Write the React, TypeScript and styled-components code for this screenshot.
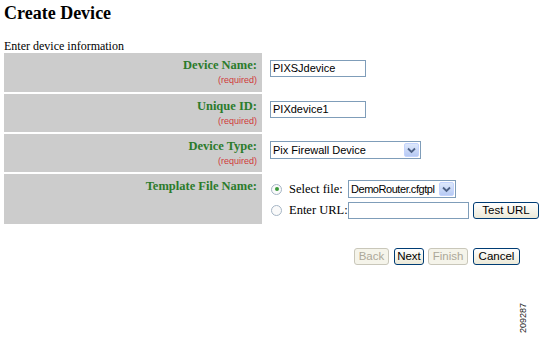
import styled, { createGlobalStyle } from "styled-components";

const GlobalStyle = createGlobalStyle`
  html, body { margin: 0; padding: 0; background: #ffffff; }
  body { font-family: "Liberation Serif", "Times New Roman", serif; color: #000; }
`;

const Page = styled.div`
  width: 555px;
  height: 339px;
  padding: 3px 0 0 4px;
  box-sizing: border-box;
  position: relative;
`;

const Title = styled.h1`
  margin: 0;
  font-size: 18px;
  font-weight: bold;
  line-height: 21px;
`;

const Intro = styled.div`
  margin-top: 15px;
  font-size: 12px;
  line-height: 14px;
`;

const Form = styled.div`
  display: grid;
  grid-template-columns: 258px 1fr;
  row-gap: 2px;
`;

const LabelCell = styled.div<{ $h: number }>`
  background: #cccccc;
  height: ${(p) => p.$h}px;
  box-sizing: border-box;
  padding: 5px 5px 0 0;
  text-align: right;
`;

const Label = styled.div`
  color: #2b7b2b;
  font-weight: bold;
  font-size: 12.5px;
  line-height: 15px;
`;

const Required = styled.div`
  color: #d03a3a;
  font-family: "Liberation Sans", Arial, sans-serif;
  font-size: 9px;
  line-height: 12px;
  margin-top: 1px;
`;

const ValueCell = styled.div<{ $top: number }>`
  padding: ${(p) => p.$top}px 0 0 8px;
`;

const TextInput = styled.div<{ $w: number }>`
  width: ${(p) => p.$w}px;
  height: 17px;
  flex-shrink: 0;
  box-sizing: border-box;
  border: 1px solid #7f9db9;
  background: #fff;
  font-family: "Liberation Sans", Arial, sans-serif;
  font-size: 11px;
  line-height: 15px;
  padding-left: 2px;
  white-space: nowrap;
  overflow: hidden;
`;

const SelectBox = styled.div<{ $w: number }>`
  width: ${(p) => p.$w}px;
  height: 18px;
  flex-shrink: 0;
  box-sizing: border-box;
  border: 1px solid #7f9db9;
  background: #fff;
  display: flex;
  align-items: stretch;
  font-family: "Liberation Sans", Arial, sans-serif;
  font-size: 11px;
`;

const SelectText = styled.div<{ $tight?: boolean }>`
  flex: 1;
  padding-left: 2px;
  line-height: 16px;
  letter-spacing: ${(p) => (p.$tight ? "-0.45px" : "0")};
  white-space: nowrap;
  overflow: hidden;
`;

const Arrow = styled.div`
  width: 15px;
  flex-shrink: 0;
  margin: 1px;
  border-radius: 2px;
  background: linear-gradient(#dde8fb, #b7caf4);
  border: 1px solid #c3d3fd;
  box-sizing: border-box;
  display: flex;
  align-items: center;
  justify-content: center;
`;

const RadioGroup = styled.div`
  display: flex;
  flex-direction: column;
  gap: 3px;
`;

const RadioRow = styled.div`
  display: flex;
  align-items: center;
  height: 18px;
  font-size: 12.5px;
  white-space: nowrap;
`;

const Radio = styled.span<{ $on?: boolean }>`
  width: 9px;
  height: 9px;
  flex-shrink: 0;
  border: 1px solid #a5b5c5;
  border-radius: 50%;
  margin: 0 7px 0 1px;
  background: #fafafa;
  display: flex;
  align-items: center;
  justify-content: center;
  &::after {
    content: "";
    width: 4px;
    height: 4px;
    border-radius: 50%;
    background: ${(p) => (p.$on ? "#3b9a3b" : "transparent")};
  }
`;

const RadioLabel = styled.span<{ $w: number }>`
  width: ${(p) => p.$w}px;
  flex-shrink: 0;
`;

const XpButton = styled.div<{ $w: number; $off?: boolean; $gap?: number }>`
  width: ${(p) => p.$w}px;
  height: 17px;
  flex-shrink: 0;
  margin-left: ${(p) => p.$gap ?? 0}px;
  box-sizing: border-box;
  border: 1px solid ${(p) => (p.$off ? "#c9c7ba" : "#003c74")};
  border-radius: 3px;
  background: ${(p) => (p.$off ? "#f5f4ea" : "linear-gradient(#ffffff, #ece9d8)")};
  color: ${(p) => (p.$off ? "#aca899" : "#000")};
  font-family: "Liberation Sans", Arial, sans-serif;
  font-size: 11.5px;
  line-height: 15px;
  text-align: center;
`;

const ButtonBar = styled.div`
  display: flex;
  justify-content: flex-end;
  margin: 24px 35px 0 0;
`;

const FigureId = styled.div`
  position: absolute;
  left: 508px;
  top: 313px;
  transform: rotate(-90deg);
  font-family: "Liberation Sans", Arial, sans-serif;
  font-size: 9px;
  color: #222;
`;

const Chevron = () => (
  <svg width="9" height="7" viewBox="0 0 9 7">
    <path d="M1 1.5 L4.5 5 L8 1.5" fill="none" stroke="#4d6185" strokeWidth="1.8" />
  </svg>
);

export default function App() {
  return (
    <>
      <GlobalStyle />
      <Page>
        <Title>Create Device</Title>
        <Intro>Enter device information</Intro>
        <Form>
          <LabelCell $h={39}>
            <Label>Device Name:</Label>
            <Required>(required)</Required>
          </LabelCell>
          <ValueCell $top={7}>
            <TextInput $w={96}>PIXSJdevice</TextInput>
          </ValueCell>

          <LabelCell $h={38}>
            <Label>Unique ID:</Label>
            <Required>(required)</Required>
          </LabelCell>
          <ValueCell $top={7}>
            <TextInput $w={96}>PIXdevice1</TextInput>
          </ValueCell>

          <LabelCell $h={38}>
            <Label>Device Type:</Label>
            <Required>(required)</Required>
          </LabelCell>
          <ValueCell $top={7}>
            <SelectBox $w={151}>
              <SelectText>Pix Firewall Device</SelectText>
              <Arrow>
                <Chevron />
              </Arrow>
            </SelectBox>
          </ValueCell>

          <LabelCell $h={50}>
            <Label>Template File Name:</Label>
          </LabelCell>
          <ValueCell $top={6}>
            <RadioGroup>
              <RadioRow>
                <Radio $on />
                <RadioLabel $w={59}>Select file:</RadioLabel>
                <SelectBox $w={108}>
                  <SelectText $tight>DemoRouter.cfgtpl</SelectText>
                  <Arrow>
                    <Chevron />
                  </Arrow>
                </SelectBox>
              </RadioRow>
              <RadioRow>
                <Radio />
                <RadioLabel $w={59}>Enter URL:</RadioLabel>
                <TextInput $w={121} />
                <XpButton $w={66} $gap={4}>
                  Test URL
                </XpButton>
              </RadioRow>
            </RadioGroup>
          </ValueCell>
        </Form>
        <ButtonBar>
          <XpButton $w={35} $off>
            Back
          </XpButton>
          <XpButton $w={30} $gap={5}>
            Next
          </XpButton>
          <XpButton $w={40} $off $gap={4}>
            Finish
          </XpButton>
          <XpButton $w={47} $gap={5}>
            Cancel
          </XpButton>
        </ButtonBar>
        <FigureId>209287</FigureId>
      </Page>
    </>
  );
}
